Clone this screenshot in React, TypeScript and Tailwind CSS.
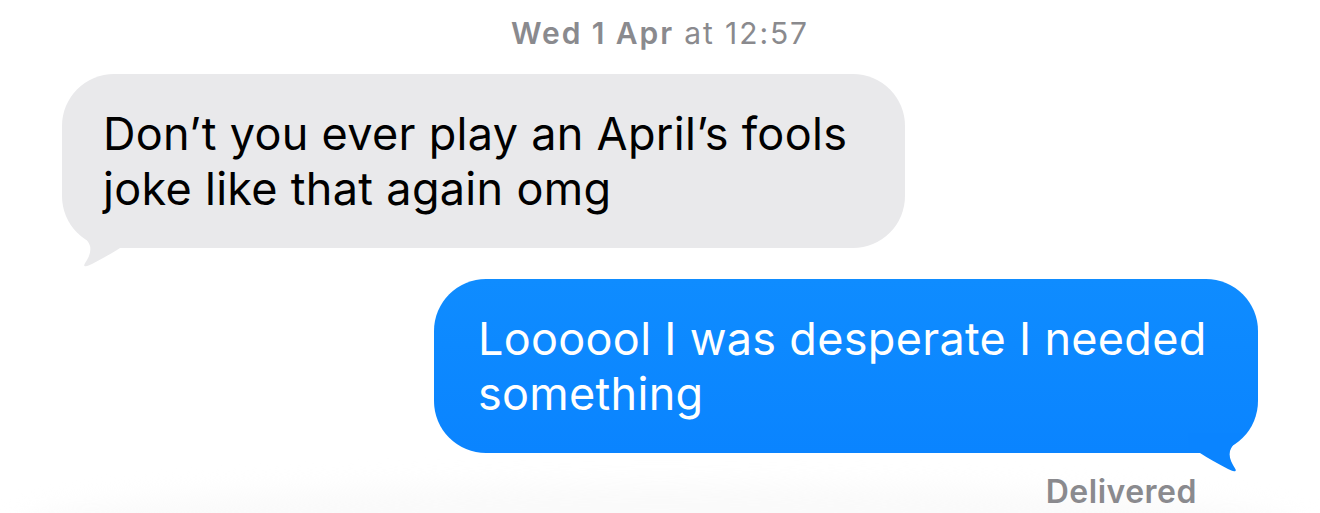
import React from 'react';

const font = { fontFamily: 'Inter, "Noto Sans", sans-serif' };

const App: React.FC = () => {
  return (
    <div className="relative w-[1320px] h-[513px] bg-white overflow-hidden flex flex-col" style={font}>
      {/* faint glow at the bottom edge */}
      <div className="absolute left-[20px] right-[20px] top-[484px] h-[80px] rounded-[50%] bg-[#fafafa] blur-md" />

      <div className="relative pt-[15px] text-center text-[30px] leading-[36px] tracking-[1.9px] text-[#8a8a8e]">
        <span className="font-semibold">Wed 1 Apr</span> at 12:57
      </div>

      <div className="relative mt-[23px] pl-[62px] flex">
        <div className="relative w-[843px] bg-[#e9e9eb] rounded-[52px] pl-[41px] py-[32px] text-black text-[45px] leading-[55px] tracking-[0.3px]">
          <p className="relative z-10">Don’t you ever play an April’s fools</p>
          <p className="relative z-10">joke like that again omg</p>
          <svg className="absolute left-0 bottom-[-20px]" width="70" height="40" viewBox="0 0 70 40">
            <path d="M58 20 C50 25 40 31 30 36 C27 37.5 24 39 22.5 38 C21.5 37 23 35.5 25 32 C28 27 29 22 28 18 C27 14 24 11 20 7 L16 0 L70 0 L70 20 Z" fill="#e9e9eb" />
          </svg>
        </div>
      </div>

      <div className="relative mt-[31px] pr-[62px] flex justify-end">
        <div className="relative w-[824px] bg-gradient-to-b from-[#0f8cff] to-[#0a84ff] rounded-[52px] pl-[44px] py-[32px] text-white text-[45px] leading-[55px] tracking-[0.3px]">
          <p className="relative z-10">Loooool I was desperate I needed</p>
          <p className="relative z-10">something</p>
          <svg className="absolute right-0 bottom-[-20px]" width="70" height="40" viewBox="0 0 70 40">
            <path d="M12 20 C20 25 30 31 40 36 C43 37.5 46 39 47.5 38 C48.5 37 47 35.5 45 32 C42 27 41 22 42 18 C43 14 46 11 50 7 L54 0 L0 0 L0 20 Z" fill="#0a84ff" />
          </svg>
        </div>
      </div>

      <div className="relative mt-[20px] pr-[123px] text-right text-[32px] leading-[38px] tracking-[0.5px] font-semibold text-[#8a8a8e]">
        Delivered
      </div>
    </div>
  );
};

export default App;
